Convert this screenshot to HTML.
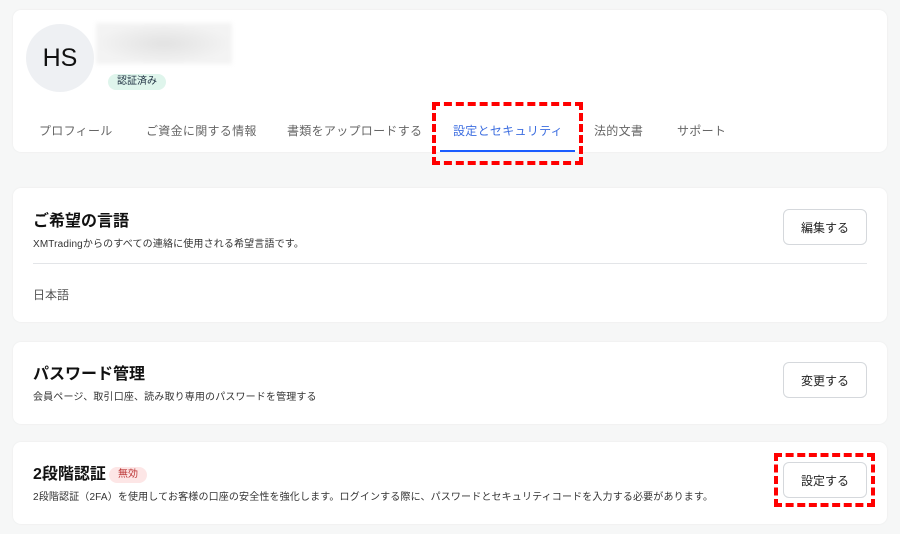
<!DOCTYPE html>
<html><head><meta charset="utf-8"><style>
*{margin:0;padding:0;box-sizing:border-box}
body{width:900px;height:534px;background:#f6f7f7;font-family:"Liberation Sans","Noto Sans CJK JP",sans-serif;position:relative;overflow:hidden;color:#1b1b1b}
.card{position:absolute;left:13px;width:874px;background:#fff;border-radius:8px;box-shadow:0 0 2px rgba(0,0,0,.06)}
.abs{position:absolute;white-space:nowrap}
.btn{position:absolute;left:770px;width:84px;height:36px;border:1px solid #d5d8dc;border-radius:6px;font-size:12px;display:flex;align-items:center;justify-content:center;color:#222}
.t{font-size:16px;font-weight:bold;color:#111;line-height:22px}
.s{font-size:10px;color:#333;letter-spacing:0.15px}
.tab{position:absolute;top:122px;font-size:12px;color:#666;letter-spacing:0.3px}
.red{position:absolute;border:4px dashed #f00}
</style></head><body>
<div class="card" style="top:10px;height:142px"></div>
<div class="abs" style="left:26px;top:24px;width:68px;height:68px;border-radius:50%;background:#eef0f3;font-size:25px;display:flex;align-items:center;justify-content:center;color:#111">HS</div>
<div class="abs" style="left:96px;top:23px;width:136px;height:41px;background:radial-gradient(ellipse at 50% 50%,#e2e2e2,#f3f3f3 70%);filter:blur(2px)"></div>
<div class="abs" style="left:108px;top:74px;width:58px;height:16px;border-radius:8px;background:#dff5ec;font-size:10px;color:#234;text-align:center;line-height:16px">認証済み</div>
<div class="tab" style="left:39px">プロフィール</div>
<div class="tab" style="left:146px">ご資金に関する情報</div>
<div class="tab" style="left:287px">書類をアップロードする</div>
<div class="tab" style="left:453px;color:#3d6ee0">設定とセキュリティ</div>
<div class="tab" style="left:594px">法的文書</div>
<div class="tab" style="left:677px">サポート</div>
<div class="abs" style="left:440px;top:150px;width:135px;height:2px;background:#1a5cff"></div>
<div class="red" style="left:432px;top:102px;width:151px;height:63px"></div>

<div class="card" style="top:188px;height:134px">
<div class="abs t" style="left:20px;top:23px">ご希望の言語</div>
<div class="abs s" style="left:20px;top:47px">XMTradingからのすべての連絡に使用される希望言語です。</div>
<div class="abs" style="left:20px;top:75px;width:834px;height:1px;background:#e3e5e8"></div>
<div class="abs" style="left:20px;top:98px;font-size:12px;color:#555">日本語</div>
<div class="btn" style="top:21px">編集する</div>
</div>

<div class="card" style="top:342px;height:82px">
<div class="abs t" style="left:20px;top:22px">パスワード管理</div>
<div class="abs s" style="left:20px;top:46px">会員ページ、取引口座、読み取り専用のパスワードを管理する</div>
<div class="btn" style="top:20px">変更する</div>
</div>

<div class="card" style="top:442px;height:82px">
<div class="abs t" style="left:20px;top:22px">2段階認証</div>
<div class="abs" style="left:96px;top:25px;width:38px;height:16px;border-radius:8px;background:#fde6e6;color:#b33;font-size:10px;text-align:center;line-height:16px">無効</div>
<div class="abs s" style="left:20px;top:46px">2段階認証（2FA）を使用してお客様の口座の安全性を強化します。ログインする際に、パスワードとセキュリティコードを入力する必要があります。</div>
<div class="btn" style="top:20px">設定する</div>
</div>
<div class="red" style="left:774px;top:453px;width:101px;height:54px"></div>
</body></html>
